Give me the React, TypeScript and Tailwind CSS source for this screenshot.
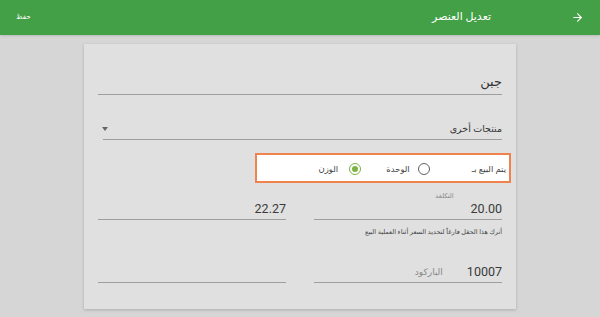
import { ArrowRight } from "lucide-react"

const font = { fontFamily: "Roboto, 'Noto Sans', 'DejaVu Sans', sans-serif" }

const Radio = ({ label, checked, gap }: { label: string; checked?: boolean; gap: string }) => (
  <div className={`flex items-center ${gap}`}>
    <span
      className={`flex h-[12px] w-[12px] items-center justify-center rounded-full border-[1.5px] ${
        checked ? "border-[#7cb342]" : "border-[#616161]"
      }`}
    >
      {checked && <span className="h-[6px] w-[6px] rounded-full bg-[#7cb342]" />}
    </span>
    <span className="text-[8.5px] text-[#444]">{label}</span>
  </div>
)

export default function App() {
  return (
    <div className="h-[317px] w-[600px] overflow-hidden bg-[#d6d6d6]" style={font}>
      <header dir="rtl" className="flex h-[35px] items-center bg-[#43a047] px-[16px] text-white shadow">
        <ArrowRight className="h-[13px] w-[13px]" strokeWidth={2} />
        <span className="mr-[80px] text-[11px]">تعديل العنصر</span>
        <span className="mr-auto text-[7px]">حفظ</span>
      </header>

      <div dir="rtl" className="mx-auto mt-[9px] h-[265px] w-[432px] bg-[#e0e0e0] px-[14px] shadow-[0_1px_3px_rgba(0,0,0,0.2)]">
        <div className="border-b border-[#9e9e9e] pb-[4px] pt-[30px] text-[13px] leading-[16px] text-[#333]">جبن</div>

        <div className="ml-[5px] mt-[27px] flex items-center justify-between border-b border-[#9e9e9e] pb-[3px] text-[9.5px] leading-[14px] text-[#333]">
          <span>منتجات أخرى</span>
          <span className="ml-[-1px] h-0 w-0 border-x-[3px] border-t-[4px] border-x-transparent border-t-[#666]" />
        </div>

        <div className="mr-[-9px] mt-[13px] flex h-[30px] w-[256px] items-center border-2 border-[#f0834d] bg-white pr-[3px] pt-[2px]">
          <span className="text-[8.5px] text-[#444]">يتم البيع بـ</span>
          <div className="mr-[42px]"><Radio label="الوحدة" gap="gap-[8px]" /></div>
          <div className="mr-[25px]"><Radio label="الوزن" checked gap="gap-[11px]" /></div>
        </div>

        <div className="mt-[9px] grid grid-cols-2 gap-x-[28px]">
          <div>
            <div className="pl-[73px] text-center text-[6.5px] leading-[9px] text-[#888]">التكلفة</div>
            <div className="border-b border-[#9e9e9e] pb-[2px] text-[12.5px] leading-[16px] text-[#3a3a3a]">20.00</div>
            <div className="mt-[7px] text-[6.5px] leading-[10px] text-[#444]">أترك هذا الحقل فارغاً لتحديد السعر أثناء العملية البيع</div>
          </div>
          <div className="pt-[9px]">
            <div className="border-b border-[#9e9e9e] pb-[2px] text-[12.5px] leading-[16px] text-[#3a3a3a]">22.27</div>
          </div>

          <div className="mt-[27px] flex items-center border-b border-[#9e9e9e] pb-[2px] leading-[16px]">
            <span className="text-[12.5px] text-[#3a3a3a]">10007</span>
            <span className="mr-[24px] text-[9px] text-[#888]">الباركود</span>
          </div>
          <div className="mt-[27px] h-[19px] border-b border-[#9e9e9e]" />
        </div>
      </div>
    </div>
  )
}
